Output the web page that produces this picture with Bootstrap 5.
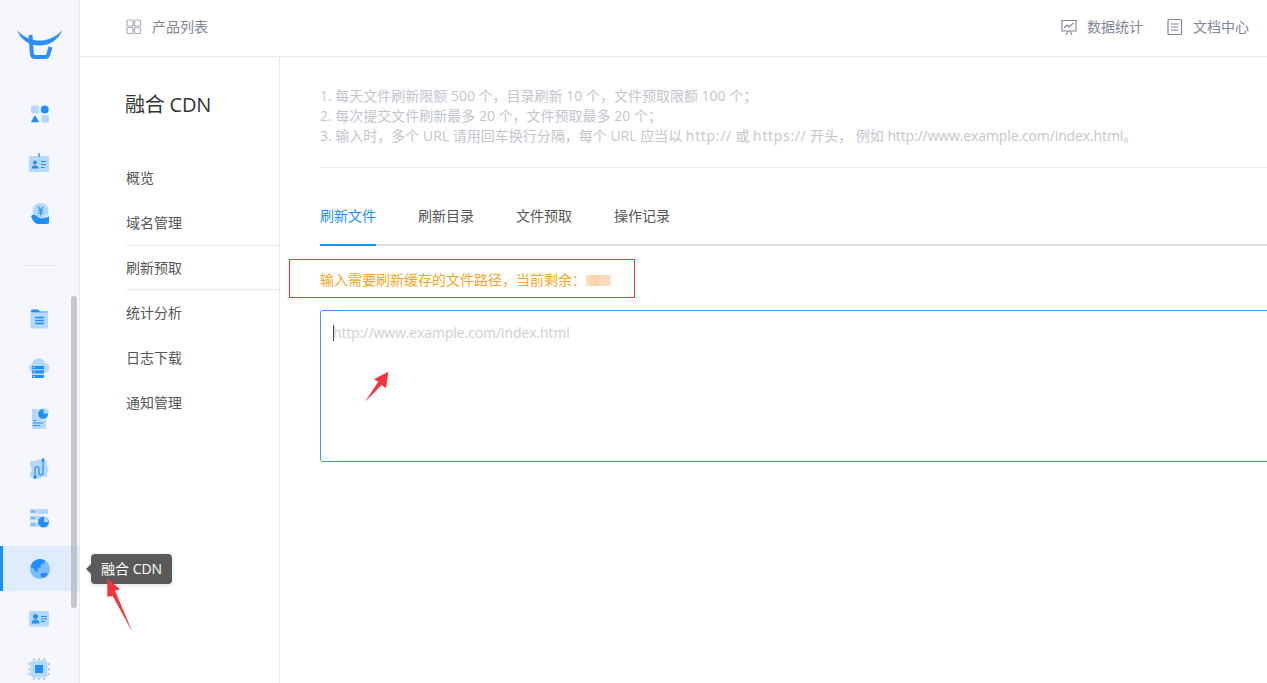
<!DOCTYPE html>
<html lang="zh-CN">
<head>
  <meta charset="UTF-8">
  <meta name="viewport" content="width=device-width, initial-scale=1.0">
  <title>融合 CDN - 刷新预取</title>

  <link href="https://cdn.jsdelivr.net/npm/bootstrap@5.3.0/dist/css/bootstrap.min.css" rel="stylesheet">

  <style>
    html, body {
      height: 100%;
      overflow: hidden;
    }
    body {
      font-family: "Open Sans", "Noto Sans CJK SC", sans-serif;
      font-size: 14px;
      line-height: 20px;
      color: #555;
      background-color: #fff;
    }
    .shell {
      height: 683px;
      overflow: hidden;
      position: relative;
    }
    .fill-col {
      min-width: 0;
      min-height: 0;
    }
    /* punctuation sits centred in its cell, as in the Traditional cut */
    .pct {
      font-family: "Noto Sans CJK TC", sans-serif;
      line-height: 0;
    }
    .proto {
      letter-spacing: .7px;
    }
    .sample-url {
      letter-spacing: -.12px;
    }

    /* left rail */
    .rail {
      width: 80px;
      flex: none;
      background-color: #f5f7fc;
      border-right: 1px solid #e8eaf2;
      overflow: hidden;
    }
    .rail-logo {
      height: 91px;
      padding: 28px 0 0 16px;
    }
    .rail-item {
      height: 45px;
      margin-bottom: 5px;
      padding-left: 27px;
      border-left: 0 solid #1890ff;
    }
    .rail-item.on {
      background-color: #deecfd;
      border-left-width: 3px;
      padding-left: 24px;
    }
    .rail-line {
      width: 32px;
      height: 1px;
      margin: 29px 0 30px 24px;
      background-color: #e6e8f0;
    }
    .rail-scroll {
      position: absolute;
      left: 71px;
      top: 296px;
      width: 6px;
      height: 312px;
      border-radius: 3px;
      background-color: rgba(170, 170, 170, .62);
    }

    /* top bar */
    .topbar {
      height: 57px;
      flex: none;
      border-bottom: 1px solid #e8eaf2;
      padding: 0 18px 2px 46px;
      color: #7f8694;
    }
    .topbar a {
      color: #7f8694;
      text-decoration: none;
    }
    .top-ico {
      margin-right: 10px;
    }
    .top-ico.tight {
      margin-right: 9px;
    }

    /* second column */
    .subnav {
      width: 200px;
      flex: none;
      border-right: 1px solid #e8eaf2;
      padding-left: 46px;
    }
    .subnav h1 {
      font-size: 20px;
      line-height: 28px;
      font-weight: 400;
      color: #333;
      letter-spacing: -.2px;
      margin: 34px 0 36px -1px;
    }
    .subnav .nav-link {
      height: 45px;
      line-height: 45px;
      padding: 0;
      color: #555;
    }
    .subnav .nav-link.active {
      line-height: 43px;
      border-top: 1px solid #e8eaf2;
      border-bottom: 1px solid #e8eaf2;
    }

    /* content */
    .pane {
      flex: 1;
      min-width: 0;
      overflow: hidden;
      padding: 29px 0 0 40px;
    }
    .notes {
      color: #c2c6ce;
      padding-bottom: 21px;
      border-bottom: 1px solid #eceef3;
      white-space: nowrap;
      margin-bottom: 27px;
    }
    .tabbar {
      border-bottom: 2px solid #dcdfe4;
      gap: 42px;
      height: 51px;
    }
    .tabbar .nav-link {
      padding: 11px 0 0;
      height: 51px;
      color: #555;
      border-bottom: 2px solid transparent;
    }
    .tabbar .nav-link.active {
      color: #1890ff;
      border-bottom-color: #1890ff;
    }
    .hint {
      color: #f5a623;
      margin: 24px 0 20px;
      height: 20px;
    }
    .hint-blur {
      width: 25px;
      height: 11px;
      background: linear-gradient(90deg, #fde3bd 0, #fbcfae 40%, #fcdcb4 70%, #fbd5cf 85%, #fde3bd 100%);
    }
    .url-wrap {
      width: 1100px;
    }
    .url-box {
      height: 152px;
      padding: 12px;
      font-size: 14px;
      line-height: 20px;
      border: 1px solid #3f9bff;
      border-radius: 3px;
      box-shadow: none;
      resize: none;
      letter-spacing: -.09px;
      font-family: "Open Sans", "Noto Sans CJK SC", sans-serif;
    }
    .url-box::placeholder {
      color: #cbcfd6;
    }
    .url-caret {
      position: absolute;
      left: 13px;
      top: 15px;
      width: 1px;
      height: 16px;
      background-color: #444;
    }

    /* things laid over the page */
    .rail-tip {
      position: absolute;
      left: 91px;
      top: 554px;
      width: 81px;
      height: 30px;
      line-height: 29px;
      padding-left: 10px;
      border-radius: 4px;
      background-color: #5a5a5a;
      color: #fff;
      font-size: 14px;
      white-space: nowrap;
      box-shadow: 0 1px 4px rgba(0, 0, 0, .15);
    }
    .rail-tip::before {
      content: "";
      position: absolute;
      left: -5px;
      top: 10px;
      border-style: solid;
      border-width: 5px 5px 5px 0;
      border-color: transparent #5a5a5a transparent transparent;
    }
    .mark-box {
      position: absolute;
      left: 289px;
      top: 259px;
      width: 346px;
      height: 39px;
      border: 1px solid #f0363a;
    }
    .mark-arrows {
      position: absolute;
      left: 0;
      top: 0;
      pointer-events: none;
    }
  </style>
</head>
<body>

<div class="shell d-flex">

  <!-- Left rail -->
  <aside class="rail">
    <div class="rail-logo">
      <svg width="48" height="34" viewBox="0 0 48 34">
        <path d="M1 2C8 10 16 12.500 23.500 12.500S39 10 46.500 2C42 12 34 17.500 23.500 17.500S5 12 1 2Z" fill="#2b8fff"/>
        <path d="M14.500 7L15.800 25.500Q16 29 19.500 29H29Q32 29 32.500 26L34.500 19" fill="none" stroke="#2b8fff" stroke-width="4"/>
      </svg>
    </div>

    <div class="rail-item d-flex align-items-center">
      <svg width="24" height="24" viewBox="0 0 24 24">
        <rect x="4" y="3.500" width="8" height="8" rx="1.500" fill="#b5d8ff"/>
        <circle cx="17.700" cy="7.400" r="4" fill="#1f8fff"/>
        <path d="M8 13L12.200 20.300H3.800Z" fill="#1f8fff"/>
        <rect x="14.500" y="13" width="7.500" height="7.500" rx="1.200" fill="#b5d8ff"/>
      </svg>
    </div>
    <div class="rail-item d-flex align-items-center">
      <svg width="24" height="24" viewBox="0 0 24 24">
        <rect x="2" y="4" width="20" height="16" rx="1.500" fill="#b5d8ff"/>
        <rect x="11.300" y="1" width="1.400" height="4" fill="#1f8fff"/>
        <circle cx="8" cy="10.500" r="2" fill="#1f8fff"/>
        <path d="M4.500 16.500a3.500 3 0 0 1 7 0Z" fill="#1f8fff"/>
        <path d="M14 9.500h5M14 12.500h5M14 15.500h3.500" stroke="#1f8fff" stroke-width="1"/>
      </svg>
    </div>
    <div class="rail-item d-flex align-items-center">
      <svg width="24" height="24" viewBox="0 0 24 24">
        <circle cx="13.700" cy="9" r="8" fill="#b5d8ff"/>
        <path d="M11 4.500L13.700 8l2.700-3.500M11 8.700h5.400M11 11h5.400M13.700 8v5.500" fill="none" stroke="#1f8fff" stroke-width="1.100"/>
        <path d="M4 14Q6 11.500 8 13Q11 16 14 16.500Q18 16.500 22 14.500V20.500Q22 22 20 22H11Q6 21 4 14Z" fill="#1f8fff"/>
      </svg>
    </div>

    <div class="rail-line"></div>

    <div class="rail-item d-flex align-items-center">
      <svg width="24" height="24" viewBox="0 0 24 24">
        <path d="M4 5V3.500Q4 2.500 5 2.500H11L13 4.500H21V5.500H4Z" fill="#1f8fff"/>
        <rect x="3.500" y="6" width="17.500" height="15.500" rx="1.500" fill="#b5d8ff"/>
        <path d="M8 10.500h9M8 13.500h9M8 16.500h9" stroke="#1f8fff" stroke-width="1.300"/>
      </svg>
    </div>
    <div class="rail-item d-flex align-items-center">
      <svg width="24" height="24" viewBox="0 0 24 24">
        <path d="M6 15.500A4.500 4.500 0 0 1 5 6.800A7 7 0 0 1 18.500 6.300A4.700 4.700 0 0 1 18.500 15.500Z" fill="#b5d8ff"/>
        <rect x="5" y="9" width="12" height="3.200" fill="#1f8fff"/>
        <rect x="5" y="13.400" width="12" height="3.200" fill="#1f8fff"/>
        <rect x="5" y="17.800" width="12" height="3.200" fill="#1f8fff"/>
        <path d="M6.200 10.600h1.500M6.200 15h1.500M6.200 19.400h1.500" stroke="#fff" stroke-width="1"/>
      </svg>
    </div>
    <div class="rail-item d-flex align-items-center">
      <svg width="24" height="24" viewBox="0 0 24 24">
        <path d="M5 2H14V10H19V22H5Z" fill="#b5d8ff"/>
        <circle cx="16" cy="7" r="5.500" fill="#1f8fff" stroke="#f5f7fc" stroke-width="1"/>
        <path d="M16.500 1A5.500 5.500 0 0 1 22 6.500H16.500Z" fill="#b5d8ff"/>
        <path d="M6 13.500h3M6 16h10M6 18.500h7" stroke="#1f8fff" stroke-width="1"/>
      </svg>
    </div>
    <div class="rail-item d-flex align-items-center">
      <svg width="24" height="24" viewBox="0 0 24 24">
        <path d="M3 4H8.500Q9 2.500 11.500 2.500T14.500 4H20V9.500Q21.500 10 21.500 12.500T20 15.500V20H15Q14.500 21.500 12 21.500T9 20H3V15.500Q4.500 15 4.500 12.500T3 9.500Z" fill="#b5d8ff"/>
        <path d="M8 20.500V13Q8 9.500 10 9.500T12 13V15.500Q12 18 14 18T16 15.500V3.500" fill="none" stroke="#1f8fff" stroke-width="1.200"/>
        <circle cx="8" cy="20.300" r="1.700" fill="#1f8fff"/>
        <circle cx="16" cy="3" r="1.700" fill="#1f8fff"/>
      </svg>
    </div>
    <div class="rail-item d-flex align-items-center">
      <svg width="24" height="24" viewBox="0 0 24 24">
        <rect x="3" y="2" width="18" height="5" rx="1" fill="#b5d8ff"/>
        <rect x="3" y="8.500" width="11" height="5" rx="1" fill="#b5d8ff"/>
        <rect x="3" y="15" width="9" height="5" rx="1" fill="#b5d8ff"/>
        <path d="M5 3.500v2M7 3.500v2M5 10v2M7 10v2M5 16.500v2M7 16.500v2" stroke="#1f8fff" stroke-width="1"/>
        <circle cx="16.500" cy="15" r="5.500" fill="#1f8fff"/>
        <path d="M17 9.500A5.500 5.500 0 0 1 21.500 15H17Z" fill="#b5d8ff"/>
      </svg>
    </div>
    <div class="rail-item on d-flex align-items-center">
      <svg width="24" height="24" viewBox="0 0 24 24">
        <circle cx="13" cy="12" r="10" fill="#7dbbff"/>
        <path d="M8 3.500A10 10 0 0 1 18.500 3.700L16.500 6.500L14 7.500L13.500 10.500L10.500 12L11 15L8.500 14.500L6.500 11L3.500 10.500A10 10 0 0 1 8 3.500Z" fill="#1f8fff"/>
        <path d="M13 17L17 15.500L21 16.500L19 20L15 20.500Z" fill="#1f8fff"/>
      </svg>
    </div>
    <div class="rail-item d-flex align-items-center">
      <svg width="24" height="24" viewBox="0 0 24 24">
        <rect x="2" y="4" width="20" height="15.500" rx="1.500" fill="#b5d8ff"/>
        <circle cx="8.500" cy="9.500" r="2.500" fill="#1f8fff"/>
        <path d="M4.500 16.500Q5 12.500 8.500 12.500T12.500 16.500Z" fill="#1f8fff"/>
        <path d="M14 9.500h6M14 12h6M14 14.500h4" stroke="#1f8fff" stroke-width="1"/>
      </svg>
    </div>
    <div class="rail-item d-flex align-items-center">
      <svg width="24" height="24" viewBox="0 0 24 24">
        <rect x="3.500" y="3.500" width="17" height="17" rx="3" fill="#b5d8ff"/>
        <rect x="8" y="8" width="8" height="8" fill="#1f8fff"/>
        <path d="M7 1.500v1.500M12 1.500v1.500M17 1.500v1.500M7 21v1.500M12 21v1.500M17 21v1.500M1.500 7h1.500M1.500 12h1.500M1.500 17h1.500M21 7h1.500M21 12h1.500M21 17h1.500" stroke="#1f8fff" stroke-width="1"/>
      </svg>
    </div>
  </aside>
  <div class="rail-scroll"></div>

  <div class="flex-grow-1 d-flex flex-column fill-col">

    <!-- Top bar -->
    <header class="topbar d-flex align-items-center justify-content-between">
      <a href="#" class="d-flex align-items-center">
        <svg class="top-ico" width="16" height="16" viewBox="0 0 16 16" fill="none" stroke="#a9afbb" stroke-width="1.200">
          <rect x="1" y="1" width="6" height="6" rx="1"/>
          <rect x="8.500" y="1" width="6" height="6" rx="1"/>
          <rect x="1" y="8.500" width="6" height="6" rx="1"/>
          <rect x="8.500" y="8.500" width="6" height="6" rx="1"/>
        </svg>
        <span>产品列表</span>
      </a>
      <div class="d-flex align-items-center">
        <a href="#" class="d-flex align-items-center me-4">
          <svg class="top-ico tight" width="18" height="18" viewBox="0 0 18 18" fill="none" stroke="#7f8694" stroke-width="1.100">
            <path d="M1 2.500H17M2 2.500V13H16V2.500M6 17L8 13M12 17L10 13"/>
            <path d="M4 10L7 7L9 9L13.500 5"/>
          </svg>
          <span>数据统计</span>
        </a>
        <a href="#" class="d-flex align-items-center">
          <svg class="top-ico" width="16" height="18" viewBox="0 0 16 18" fill="none" stroke="#7f8694" stroke-width="1.200">
            <rect x="1" y="1.500" width="13.500" height="15" rx="1"/>
            <path d="M4 6h7.500M4 9h7.500M4 12h7.500"/>
          </svg>
          <span>文档中心</span>
        </a>
      </div>
    </header>

    <div class="d-flex flex-grow-1 fill-col">

      <!-- Product menu -->
      <nav class="subnav">
        <h1>融合 CDN</h1>
        <div class="nav flex-column">
          <a class="nav-link" href="#">概览</a>
          <a class="nav-link" href="#">域名管理</a>
          <a class="nav-link active" href="#">刷新预取</a>
          <a class="nav-link" href="#">统计分析</a>
          <a class="nav-link" href="#">日志下载</a>
          <a class="nav-link" href="#">通知管理</a>
        </div>
      </nav>

      <!-- Content -->
      <main class="pane">
        <div class="notes">
          <div>1. 每天文件刷新限额 500 个<span class="pct">，</span>目录刷新 10 个<span class="pct">，</span>文件预取限额 100 个<span class="pct">；</span></div>
          <div>2. 每次提交文件刷新最多 20 个<span class="pct">，</span>文件预取最多 20 个<span class="pct">；</span></div>
          <div>3. 输入时<span class="pct">，</span>多个 URL 请用回车换行分隔<span class="pct">，</span>每个 URL 应当以 <span class="proto">http://</span> 或 <span class="proto">https://</span> 开头<span class="pct">，</span> 例如 <span class="sample-url">http://www.example.com/index.html</span>。</div>
        </div>

        <div class="nav tabbar">
          <a class="nav-link active" href="#">刷新文件</a>
          <a class="nav-link" href="#">刷新目录</a>
          <a class="nav-link" href="#">文件预取</a>
          <a class="nav-link" href="#">操作记录</a>
        </div>

        <div class="hint d-flex align-items-center">
          <span>输入需要刷新缓存的文件路径<span class="pct">，</span>当前剩余<span class="pct">：</span></span>
          <span class="hint-blur"></span>
        </div>

        <div class="url-wrap position-relative">
          <textarea class="form-control url-box" placeholder="http://www.example.com/index.html"></textarea>
          <span class="url-caret"></span>
        </div>
      </main>
    </div>
  </div>

  <!-- Tooltip and the red marks on the screenshot -->
  <div class="rail-tip">融合 CDN</div>
  <div class="mark-box"></div>
  <svg class="mark-arrows" width="1267" height="683" viewBox="0 0 1267 683">
    <path d="M107.300 578.300L120 589.300L115 590.700L132.700 632.700L112.700 596L107.300 596.700Z" fill="#f5333a"/>
    <path d="M388.300 371.700L386 388.300L381.700 385L365 401.700L378.300 381.700L374 379.300Z" fill="#f5333a"/>
  </svg>
</div>

<script src="https://cdn.jsdelivr.net/npm/bootstrap@5.3.0/dist/js/bootstrap.bundle.min.js"></script>
</body>
</html>
